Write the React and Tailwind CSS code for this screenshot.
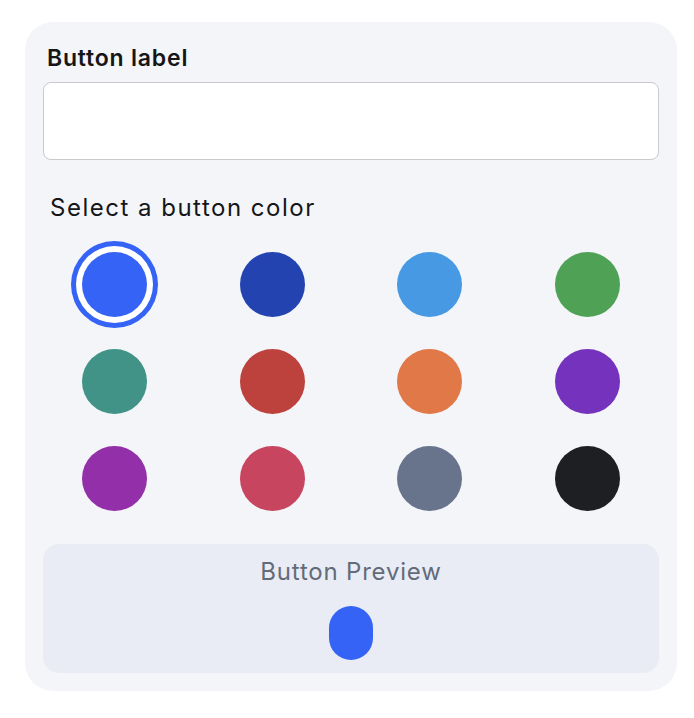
import React, { useState } from "react";

const colors = [
  "#3563f6",
  "#2343b0",
  "#4699e2",
  "#4fa255",
  "#419387",
  "#bd413c",
  "#e07848",
  "#7533bd",
  "#932fa8",
  "#c7455f",
  "#67748c",
  "#1e1f23",
];

export default function App() {
  const [selected, setSelected] = useState(0);
  const [label, setLabel] = useState("");

  return (
    <div className="min-h-screen bg-white pl-[25px] pt-[22px] font-['Inter',sans-serif]">
      <div className="w-[652px] rounded-[28px] bg-[#f4f5f9] px-[18px] pb-[18px] pt-[22px]">
        <label className="block px-1 text-[23px] font-semibold leading-[28px] tracking-[0.8px] text-[#151618]">
          Button label
        </label>
        <input
          value={label}
          onChange={(e) => setLabel(e.target.value)}
          className="mt-[10px] block h-[78px] w-full rounded-lg border border-[#c9c9ce] bg-white px-3 text-[18px] outline-none"
        />
        <p className="mt-[32px] px-[7px] text-[24px] leading-8 tracking-[1.5px] text-[#151618]">
          Select a button color
        </p>
        <div className="-mx-[7px] mt-[16px] grid grid-cols-4 gap-y-[9px]">
          {colors.map((c, i) => (
            <div key={c} className="flex h-[88px] items-center justify-center">
              <button
                onClick={() => setSelected(i)}
                style={{ backgroundColor: c, "--tw-ring-color": c }}
                className={
                  selected === i
                    ? "h-[65px] w-[65px] rounded-full ring-[5px] ring-offset-[6px] ring-offset-white"
                    : "h-[65px] w-[65px] rounded-full"
                }
              />
            </div>
          ))}
        </div>
        <div className="mt-[22px] flex h-[129px] flex-col items-center rounded-2xl bg-[#e9ecf5] pt-[12px]">
          <p className="text-[24px] leading-8 tracking-[0.8px] text-[#646b78]">Button Preview</p>
          <button
            style={{ backgroundColor: colors[selected] }}
            className="mt-[18px] h-[54px] w-[44px] rounded-full text-white"
          >
            {label}
          </button>
        </div>
      </div>
    </div>
  );
}
